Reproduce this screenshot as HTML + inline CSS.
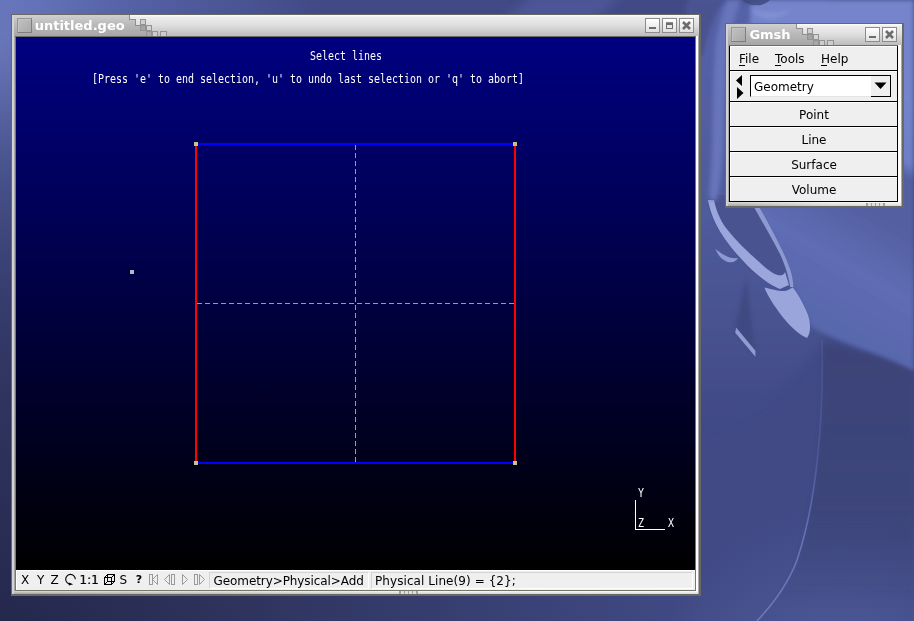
<!DOCTYPE html>
<html><head><meta charset="utf-8"><title>Gmsh</title>
<style>
*{box-sizing:border-box;margin:0;padding:0}
html,body{width:914px;height:621px;overflow:hidden}
body{position:relative;font-family:"DejaVu Sans","Liberation Sans",sans-serif;font-size:12px;color:#000;background:#414a85}
#wp{position:absolute;left:0;top:0}
.abs{position:absolute}
.win{position:absolute;background:#696963;will-change:transform}
.tb{position:absolute;left:1px;top:1px;height:21px;background:linear-gradient(180deg,#fcfcfc 0,#ececec 12%,#dedede 50%,#bcbcbc 100%)}
.ticon{position:absolute;width:15px;height:15px;border:1px solid #8c8c8c;background:linear-gradient(135deg,#c2c2c2,#a9a9a9);box-shadow:inset 1px 1px 0 #c2c2c2;border-color:#969696 #7e7e7e #7e7e7e #969696}
.ttl{position:absolute;color:#fff;font-weight:bold;font-size:13px;line-height:16px;white-space:nowrap}
.wbtn{position:absolute;width:15px;height:15px;border:1px solid #8c8c8c;background:linear-gradient(180deg,#ffffff,#e0e0e0)}
.wbtn svg{position:absolute;left:-1px;top:-1px}
.canvas{position:absolute;background:linear-gradient(180deg,#000080 0%,#000000 100%);overflow:hidden}
.mono{position:absolute;font-family:"DejaVu Sans Mono","Liberation Mono",monospace;font-size:12px;line-height:13px;color:#fff;white-space:pre;transform:scaleX(.8306);transform-origin:0 0}
.sb{position:absolute;background:#efefef}
.sbt{position:absolute;font-size:12px;line-height:16px;white-space:nowrap}
.fld{position:absolute;top:2px;height:17px;border:1px solid #d4d4d4;border-right-color:#fff;border-bottom-color:#fff;background:#efefef}
.row{position:absolute;left:0;width:167px;background:#efefef;border-top:1px solid #fff;border-left:1px solid #fff}
.btn{position:absolute;left:0;width:167px;height:24px;background:#efefef;border-top:1px solid #fff;border-left:1px solid #fff;text-align:center;line-height:24px;font-size:12px}
</style></head><body>

<svg id="wp" width="914" height="621" viewBox="0 0 914 621">
 <defs>
  <radialGradient id="wtl" cx="-10" cy="45" r="330" gradientUnits="userSpaceOnUse"><stop offset="0" stop-color="#7484cc"/><stop offset=".15" stop-color="#6b7bc3"/><stop offset=".45" stop-color="#5e6db5" stop-opacity=".75"/><stop offset="1" stop-color="#5a69b0" stop-opacity="0"/></radialGradient>
  <radialGradient id="wbl" cx="0" cy="660" r="700" gradientUnits="userSpaceOnUse"><stop offset="0" stop-color="#23264a"/><stop offset=".3" stop-color="#2b2f56" stop-opacity=".9"/><stop offset="1" stop-color="#2b2f56" stop-opacity="0"/></radialGradient>
  <linearGradient id="wtr" x1="914" y1="100" x2="784" y2="325" gradientUnits="userSpaceOnUse"><stop offset="0" stop-color="#7484cb"/><stop offset=".22" stop-color="#6f7fc7"/><stop offset=".27" stop-color="#535fa1"/><stop offset=".45" stop-color="#535fa1"/><stop offset=".58" stop-color="#5a67ab"/><stop offset=".68" stop-color="#5f6db4"/><stop offset=".85" stop-color="#5a68ae"/><stop offset="1" stop-color="#5866ac"/></linearGradient>
  <radialGradient id="wbt" cx="840" cy="700" r="190" gradientUnits="userSpaceOnUse"><stop offset="0" stop-color="#4f5a9a"/><stop offset=".4" stop-color="#4d5896" stop-opacity=".9"/><stop offset="1" stop-color="#4d5896" stop-opacity="0"/></radialGradient>
  <linearGradient id="wlf" x1="700" y1="0" x2="700" y2="420" gradientUnits="userSpaceOnUse"><stop offset="0" stop-color="#5562a8"/><stop offset=".55" stop-color="#4e5a9a"/><stop offset="1" stop-color="#414a85"/></linearGradient>
  <linearGradient id="wdk" x1="0" y1="345" x2="0" y2="621" gradientUnits="userSpaceOnUse"><stop offset="0" stop-color="#3b4376" stop-opacity=".8"/><stop offset=".55" stop-color="#3b4376" stop-opacity=".75"/><stop offset="1" stop-color="#3b4376" stop-opacity="0"/></linearGradient>
  <linearGradient id="wln" x1="0" y1="340" x2="0" y2="621" gradientUnits="userSpaceOnUse"><stop offset="0" stop-color="#5a67aa" stop-opacity=".35"/><stop offset=".4" stop-color="#5a67aa" stop-opacity=".5"/><stop offset=".7" stop-color="#6573b6" stop-opacity="1"/><stop offset="1" stop-color="#6a78ba"/></linearGradient>
  <filter id="b2" x="-20%" y="-20%" width="140%" height="140%"><feGaussianBlur stdDeviation="2"/></filter>
  <filter id="b1" x="-20%" y="-20%" width="140%" height="140%"><feGaussianBlur stdDeviation="0.7"/></filter>
  <filter id="b5" x="-30%" y="-30%" width="160%" height="160%"><feGaussianBlur stdDeviation="5"/></filter>
 </defs>
 <rect width="914" height="621" fill="#414a85"/>
 <rect width="914" height="621" fill="url(#wtl)"/>
 <rect y="440" width="914" height="181" fill="url(#wbt)"/>
 <rect width="914" height="621" fill="url(#wbl)"/>
 <path d="M535 -6H625L590 22H500Z" fill="#5461a6" opacity=".55" filter="url(#b5)"/>
 <!-- right area: general lighter zone left of/around ring -->
 <path d="M690 0H830V330C810 360 760 420 690 430Z" fill="url(#wlf)" filter="url(#b5)"/>
 <!-- bright upper-right zone bounded below by curve -->
 <path d="M752 0H914V372C880 352 840 345 811 326C806 315 800 300 792 287C789 270 780 250 770 232C762 218 755 206 750 198C745 140 745 60 752 0Z" fill="url(#wtr)" filter="url(#b2)"/>
 <!-- lower dark right of thin curve -->
 <path d="M822 345C824 420 816 505 797 560C788 585 772 605 757 621H914V372C880 356 850 350 836 345Z" fill="url(#wdk)" filter="url(#b2)"/>
 <path d="M822 340C824 420 816 505 797 560C788 585 772 605 757 621" stroke="url(#wln)" stroke-width="1.600" fill="none" filter="url(#b1)"/>
 <!-- top-left dark of strip -->
 <path d="M690 0H724C714 15 707 35 703 55H690Z" fill="#48528f" filter="url(#b2)"/>
 <!-- ring hole (dark lens) -->
 <path d="M707.700 195C708 215 715.500 230.900 746.400 267C760 280 775 286 787.600 288.900C788 275 785.100 259.300 769.600 230.900C762 218 755 205 749 195Z" fill="#48528f" filter="url(#b1)"/>
 <!-- crescent 1 -->
 <path d="M708 200C712 222 723.200 241.200 751.500 269.600C762 279 772 286 779.900 288.900L788.900 285.100L785.100 272C782 280 770 272 761.900 264.400C750 254 738.700 243.800 726 228C720 220 716 210 714 200Z" fill="#9ba7dc" filter="url(#b1)"/>
 <!-- right arc -->
 <path d="M750.300 200C758 215 769.600 233.500 780 254C786 267 789 278 790.200 287L793.500 287C793 275 788.900 264.400 782 250C773.500 232.200 764 215 755 200Z" fill="#8d9ad2" filter="url(#b1)"/>
 <!-- leaf -->
 <path d="M764.400 287.600C768 297 777.300 310.800 786 321C795.400 331.400 802 336 807 337.900C811 333 810.800 323.700 808 315C803.100 303.100 798 294 792.800 287.600L787.600 290.200C783 292 777.300 291 764.400 287.600Z" fill="#99a5db" filter="url(#b1)"/>
 <!-- blob -->
 <path d="M715.500 249C718 256 723.200 260.600 728 262C733.500 263 736 261 738.100 258C733 259 728.400 257.200 725 255.500C720.600 252.800 718 251 715.500 249Z" fill="#8d9ad2" filter="url(#b1)"/>
 <!-- dark triangle and strip -->
 <path d="M746.400 277.300L734.800 328.900L755.400 354.600Z" fill="#3f4882" filter="url(#b2)"/>
 <path d="M736.100 327.600L755.400 350.800L755.400 356.700L735.300 332.700Z" fill="#8f9cd2" filter="url(#b1)"/>
 <!-- top swirl -->
 <path d="M742 0C748 6 762 8 770 0Z" fill="#3f4880" opacity=".85" filter="url(#b1)"/>
 <path d="M750 8C760 22 780 22 792 8C780 14 765 14 750 8Z" fill="#8292d2" filter="url(#b2)"/>
 <path d="M727 0C720 20 716 35 715 50C713 80 713 120 712 150C711 170 710 185 709 200L717 200C720 185 722 170 723 150C724 120 725 80 728 50C730 35 735 15 741 0Z" fill="#6875ba" filter="url(#b2)"/>
</svg>

<!-- main window -->
<div class="win" id="w1" style="left:11px;top:14px;width:690px;height:582px">
  <div class="abs" style="left:1px;top:1px;width:2px;height:579px;background:#d2d2d2"></div>
  <div class="abs" style="left:3px;top:22px;width:1px;height:555px;background:#a8a8a8"></div>
  <div class="abs" style="left:4px;top:22px;width:681px;height:555px;background:#77776f"></div>
  <div class="abs" style="left:4px;top:22px;width:681px;height:1px;background:#6e6e68"></div>
  <div class="abs" style="left:685px;top:22px;width:2px;height:558px;background:#fdfdfd"></div>
  <div class="abs" style="left:687px;top:1px;width:1px;height:579px;background:#a8a8a8"></div>
  <div class="abs" style="left:3px;top:577px;width:684px;height:3px;background:linear-gradient(180deg,rgba(255,255,255,.45),rgba(0,0,0,.13)),linear-gradient(90deg,#bababa,#f0f0f0 60%,#fafafa)"></div>
  <div class="tb" style="width:687px">
   <svg class="abs" style="left:0;top:0" width="177" height="21" shape-rendering="crispEdges">
    <defs><linearGradient id="gga" x1="0" y1="0" x2="0" y2="1"><stop offset="0" stop-color="#d0d0d0"/><stop offset=".4" stop-color="#bcbcbc"/><stop offset="1" stop-color="#a6a6a6"/></linearGradient></defs>
    <path d="M0 0H117V4H123V10H129V16H139V21H0Z" fill="url(#gga)"/>
    <path d="M117.5 0V4.500H123.5V10.500H128.5" stroke="#8e8e8e" fill="none"/>
    <g stroke="#939393" stroke-width="1">
     <rect x="128.5" y="4.500" width="5" height="5" fill="#cfcfcf"/>
     <rect x="128.5" y="10.500" width="5" height="5" fill="#a4a4a4"/>
     <rect x="134.5" y="10.500" width="5" height="5" fill="#d4d4d4"/>
     <rect x="134.5" y="16.500" width="5" height="5" fill="#a8a8a8"/>
     <rect x="140.5" y="16.500" width="5" height="5" fill="#cccccc"/>
     <rect x="148.5" y="16.500" width="6" height="5" fill="#cccccc"/>
    </g>
   </svg>
  </div>
  <div class="abs" style="left:1px;top:1px;width:2px;height:22px;background:#d2d2d2"></div>
  <div class="ticon" style="left:6px;top:4px"></div>
  <div class="ttl" style="left:23.700px;top:4px">untitled.geo</div>
  <div class="wbtn" style="left:634px;top:4px"><svg width="15" height="15"><rect x="4" y="9" width="7" height="2" fill="#6c6c6c"/></svg></div>
  <div class="wbtn" style="left:651px;top:4px"><svg width="15" height="15"><rect x="4.500" y="5" width="6" height="5.500" fill="#e8e8e8" stroke="#6c6c6c"/><rect x="4" y="4.500" width="7" height="2.500" fill="#6c6c6c"/></svg></div>
  <div class="wbtn" style="left:668px;top:4px"><svg width="15" height="15"><path d="M4 4L11 11M11 4L4 11" stroke="#6c6c6c" stroke-width="2.600"/></svg></div>
  <div class="canvas" style="left:5px;top:23px;width:679px;height:533px">
    <div class="mono" style="left:293.500px;top:13px">Select lines</div>
    <div class="mono" style="left:75.500px;top:36px">[Press 'e' to end selection, 'u' to undo last selection or 'q' to abort]</div>
    <svg class="abs" style="left:0;top:0" width="679" height="533" shape-rendering="crispEdges">
      <line x1="181" y1="266.500" x2="498" y2="266.500" stroke="#9c9c9c" stroke-width="1" stroke-dasharray="5 3"/>
      <line x1="339.500" y1="108" x2="339.500" y2="425" stroke="#9c9c9c" stroke-width="1" stroke-dasharray="5 3"/>
      <rect x="180" y="106" width="319" height="2" fill="#0000ff"/>
      <rect x="180" y="425" width="319" height="2" fill="#0000ff"/>
      <rect x="179" y="108" width="2" height="317" fill="#ff0000"/>
      <rect x="498" y="108" width="2" height="317" fill="#ff0000"/>
      <rect x="178" y="105" width="4" height="4" fill="#c4c48c"/>
      <rect x="497" y="105" width="4" height="4" fill="#c4c48c"/>
      <rect x="178" y="424" width="4" height="4" fill="#c4c48c"/>
      <rect x="497" y="424" width="4" height="4" fill="#c4c48c"/>
      <rect x="114" y="233" width="4" height="4" fill="#b8b8b0"/>
      <path d="M619.500 463V492.500H649" stroke="#fff" fill="none"/>
    </svg>
    <div class="mono" style="left:621.700px;top:450px">Y</div>
    <div class="mono" style="left:621.500px;top:480px">Z</div>
    <div class="mono" style="left:652px;top:480px">X</div>
  </div>
  <div class="sb" style="left:5px;top:556px;width:679px;height:20px">
    <div class="abs" style="left:0;top:0;width:679px;height:1px;background:#fff"></div>
    <div class="abs" style="left:0;top:0;width:1px;height:20px;background:#fff"></div>
    <div class="sbt" style="left:5px;top:2px">X</div>
    <div class="sbt" style="left:21px;top:2px">Y</div>
    <div class="sbt" style="left:34.500px;top:2px">Z</div>
    <div class="sbt" style="left:63.300px;top:2px;text-shadow:.5px 0 0 rgba(0,0,0,.55)">1:1</div>
    <div class="sbt" style="left:103.500px;top:2px">S</div>
    <div class="sbt" style="left:119.700px;top:2px;font-weight:bold;font-size:11px">?</div>
    <svg class="abs" style="left:0;top:0" width="200" height="20">
      <path d="M59.300 9.200A4.800 4.800 0 1 0 54.500 14" stroke="#000" fill="none" stroke-width="1.100"/>
      <path d="M52.800 12.500L57.200 14.200L52.800 15.500Z" fill="#000"/>
      <g stroke="#000" fill="none" stroke-width="1" shape-rendering="crispEdges">
        <rect x="88.500" y="7.500" width="7" height="7"/>
        <rect x="91.500" y="4.500" width="7" height="7"/>
      </g>
      <path d="M88.500 7.500L91.500 4.500M95.500 7.500L98.500 4.500M88.500 14.500L91.500 11.500M95.500 14.500L98.500 11.500" stroke="#000" stroke-width="1" fill="none"/>
      <g stroke="#9a9a9a" fill="none" stroke-width="1">
        <rect x="133.500" y="4.500" width="3" height="10"/><path d="M141.500 4.500V14.500L136.500 9.500Z"/>
        <path d="M148.500 9.500L153.500 4.500V14.500Z"/><rect x="155.500" y="4.500" width="3" height="10"/>
        <path d="M166.500 4.500V14.500L171.500 9.500Z"/>
        <rect x="178.500" y="4.500" width="3" height="10"/><path d="M183.500 4.500V14.500L188.500 9.500Z"/>
      </g>
    </svg>
    <div class="fld" style="left:193px;width:160px"></div>
    <div class="fld" style="left:355px;width:322px"></div>
    <div class="sbt" style="left:197.500px;top:2.500px;letter-spacing:-.08px">Geometry&gt;Physical&gt;Add</div>
    <div class="sbt" style="left:359px;top:2.500px;letter-spacing:.07px">Physical Line(9) = {2};</div>
  </div>
  <svg class="abs" style="left:388px;top:577px" width="19" height="3" shape-rendering="crispEdges"><rect x="0" y="0" width="19" height="3" fill="#a2a2a2"/><g fill="#dedede"><rect x="2" y="0" width="3" height="3"/><rect x="6" y="0" width="3" height="3"/><rect x="10" y="0" width="3" height="3"/><rect x="14" y="0" width="3" height="3"/></g></svg>
</div>

<!-- menu window -->
<div class="win" id="w2" style="left:725px;top:23px;width:179px;height:185px">
  <div class="abs" style="left:1px;top:1px;width:2px;height:182px;background:#d2d2d2"></div>
  <div class="abs" style="left:3px;top:22px;width:1px;height:158px;background:#a8a8a8"></div>
  <div class="abs" style="left:4px;top:22px;width:169px;height:157px;background:#000"></div>
  <div class="abs" style="left:4px;top:22px;width:169px;height:1px;background:#6e6e68"></div>
  <div class="abs" style="left:173px;top:22px;width:3px;height:161px;background:#fdfdfd"></div>
  <div class="abs" style="left:176px;top:1px;width:1px;height:182px;background:#a8a8a8"></div>
  <div class="abs" style="left:3px;top:179px;width:173px;height:4px;background:linear-gradient(180deg,rgba(255,255,255,.45),rgba(0,0,0,.13)),linear-gradient(90deg,#bababa,#f0f0f0 60%,#fafafa)"></div>
  <div class="tb" style="width:176px">
   <svg class="abs" style="left:0;top:0" width="130" height="21" shape-rendering="crispEdges">
    <defs><linearGradient id="ggb" x1="0" y1="0" x2="0" y2="1"><stop offset="0" stop-color="#d0d0d0"/><stop offset=".4" stop-color="#bcbcbc"/><stop offset="1" stop-color="#a6a6a6"/></linearGradient></defs>
    <path d="M0 0H70V4H76V10H82V16H92V21H0Z" fill="url(#ggb)"/>
    <path d="M70.5 0V4.500H76.5V10.500H81.5" stroke="#8e8e8e" fill="none"/>
    <g stroke="#939393" stroke-width="1">
     <rect x="81.5" y="4.500" width="5" height="5" fill="#cfcfcf"/>
     <rect x="81.5" y="10.500" width="5" height="5" fill="#a4a4a4"/>
     <rect x="87.5" y="10.500" width="5" height="5" fill="#d4d4d4"/>
     <rect x="87.5" y="16.500" width="5" height="5" fill="#a8a8a8"/>
     <rect x="93.5" y="16.500" width="5" height="5" fill="#cccccc"/>
     <rect x="101.5" y="16.500" width="6" height="5" fill="#cccccc"/>
    </g>
   </svg>
  </div>
  <div class="abs" style="left:1px;top:1px;width:2px;height:22px;background:#d2d2d2"></div>
  <div class="ticon" style="left:6px;top:4px"></div>
  <div class="ttl" style="left:24.400px;top:4px">Gmsh</div>
  <div class="wbtn" style="left:140px;top:4px"><svg width="15" height="15"><rect x="4" y="9" width="7" height="2" fill="#6c6c6c"/></svg></div>
  <div class="wbtn" style="left:157px;top:4px"><svg width="15" height="15"><path d="M4 4L11 11M11 4L4 11" stroke="#6c6c6c" stroke-width="2.600"/></svg></div>
  <div class="abs" id="menu" style="left:5px;top:23px;width:167px;height:155px;background:#000">
    <div class="row" style="top:0;height:24px">
      <div class="sbt" style="left:8px;top:4px">File</div>
      <div class="sbt" style="left:44px;top:4px">Tools</div>
      <div class="sbt" style="left:90px;top:4px">Help</div>
      <div class="abs" style="left:8px;top:18px;width:6px;height:1px;background:#000"></div>
      <div class="abs" style="left:44px;top:18px;width:6px;height:1px;background:#000"></div>
      <div class="abs" style="left:90px;top:18px;width:6px;height:1px;background:#000"></div>
    </div>
    <div class="row" style="top:25px;height:30px">
      <svg class="abs" style="left:0;top:0" width="20" height="30"><path d="M11 3V14L5 8.500Z M6 15V27L12.500 21Z" fill="#000"/></svg>
      <div class="abs" style="left:19px;top:3px;width:141px;height:22px;background:#fff;border:1px solid #000;border-bottom-color:#e4e4e4"></div>
      <div class="abs" style="left:140px;top:4px;width:20px;height:21px;background:#efefef;border-right:1px solid #000;border-bottom:1px solid #000"></div>
      <svg class="abs" style="left:140px;top:4px" width="21" height="22"><path d="M3.500 6.500H15.500L9.500 13Z" fill="#000"/></svg>
      <div class="sbt" style="left:23px;top:7px">Geometry</div>
    </div>
    <div class="btn" style="top:56px">Point</div>
    <div class="btn" style="top:81px">Line</div>
    <div class="btn" style="top:106px">Surface</div>
    <div class="btn" style="top:131px">Volume</div>
  </div>
  <svg class="abs" style="left:141px;top:180px" width="19" height="3" shape-rendering="crispEdges"><rect x="0" y="0" width="19" height="3" fill="#a2a2a2"/><g fill="#dedede"><rect x="2" y="0" width="3" height="3"/><rect x="6" y="0" width="3" height="3"/><rect x="10" y="0" width="3" height="3"/><rect x="14" y="0" width="3" height="3"/></g></svg>
</div>
</body></html>
